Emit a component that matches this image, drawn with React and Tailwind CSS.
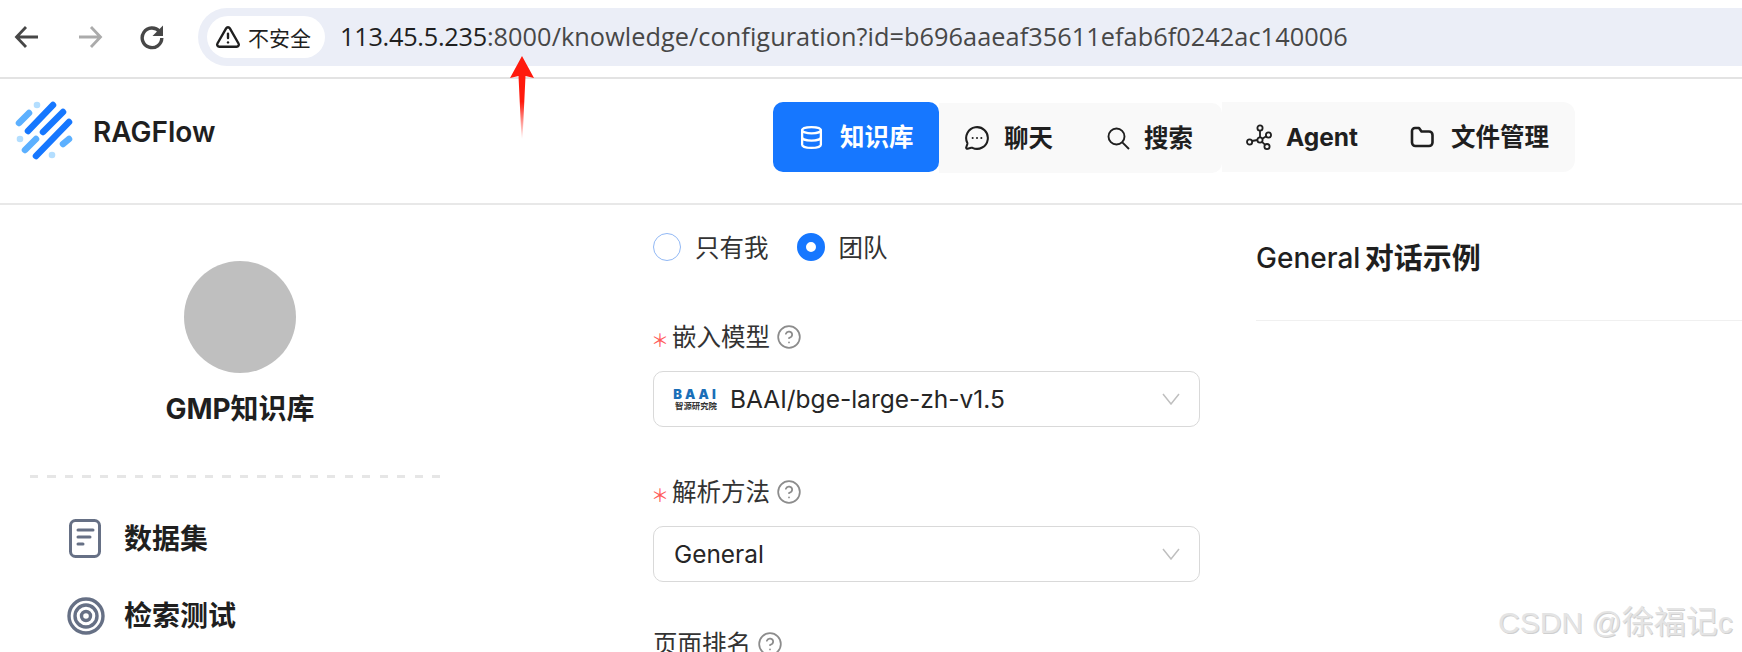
import React from "react";
import { Database, MessageCircleMore, TriangleAlert, CircleHelp } from "lucide-react";

const cjk = '"Inter","Noto Sans CJK SC",sans-serif';

function Logo() {
  const dark = [[28,131,53,105],[43,132,63,112],[36,156,69,122]];
  const light = [[19,123,29,113],[25,150,36,139],[63,144,69,139]];
  const dots = [[37,105],[20,139],[52,155]];
  return (
    <svg width="60" height="60" viewBox="14 100 60 60" className="shrink-0">
      {light.map((l, i) => <line key={i} x1={l[0]} y1={l[1]} x2={l[2]} y2={l[3]} stroke="#5cb0ff" strokeWidth="6.5" strokeLinecap="round" />)}
      {dark.map((l, i) => <line key={i} x1={l[0]} y1={l[1]} x2={l[2]} y2={l[3]} stroke="#1677ff" strokeWidth="6.5" strokeLinecap="round" />)}
      {dots.map((d, i) => <circle key={i} cx={d[0]} cy={d[1]} r="3.3" fill="#b3deff" />)}
    </svg>
  );
}

function AgentIcon() {
  return (
    <svg width="27" height="27" viewBox="0 0 27 27" fill="none" stroke="#1f1f1f" strokeWidth="1.8" className="shrink-0">
      <path d="M14 6.6 V13.4 M6 17 L11.5 16 M16.3 14.8 L20.2 12.2 M16 17.8 L19.2 20.8" />
      <circle cx="14" cy="4" r="2.6" />
      <circle cx="3.6" cy="18" r="2.6" />
      <circle cx="22.5" cy="11" r="2.6" />
      <circle cx="21" cy="22.6" r="2.6" />
      <circle cx="14" cy="16" r="2.6" />
    </svg>
  );
}

function FolderIcon() {
  return (
    <svg width="24" height="22" viewBox="0 0 24 22" fill="none" stroke="#1f1f1f" strokeWidth="2.6" className="shrink-0">
      <path d="M2 5 A3 3 0 0 1 5 2 H9 L11.5 5.5 H19 A3.5 3.5 0 0 1 22.5 9 V16.5 A3.5 3.5 0 0 1 19 20 H5.5 A3.5 3.5 0 0 1 2 16.5 Z" strokeLinejoin="round" />
    </svg>
  );
}

function SearchIcon() {
  return (
    <svg width="23" height="23" viewBox="0 0 23 23" fill="none" stroke="#1f1f1f" strokeWidth="1.9" className="shrink-0">
      <circle cx="9.5" cy="9.5" r="8" />
      <path d="M15.3 15.3 L22 22" />
    </svg>
  );
}

function Chevron() {
  return (
    <svg width="18" height="12" viewBox="0 0 18 12" fill="none" stroke="#bfbfbf" strokeWidth="1.5" className="shrink-0">
      <path d="M1 1 L9 11 L17 1" />
    </svg>
  );
}

function NavItem({ icon, label, active, className }) {
  return (
    <div className={`flex items-center h-full ${active ? "bg-[#1677ff] text-white rounded-[10px]" : "text-[#1f1f1f]"} ${className}`}>
      {icon}
      <span className="text-[24.5px] font-bold leading-none">{label}</span>
    </div>
  );
}

function FieldLabel({ text, required }) {
  return (
    <div className="flex items-center h-[30px] text-[24.5px] text-[#333333]">
      {required && <span className="text-[#ff5a5a] text-[18px] leading-none w-[21px] -ml-[2px] pt-[3px]" style={{ fontFamily: '"Noto Sans CJK SC",sans-serif' }}>＊</span>}
      <span className="leading-none">{text}</span>
      <CircleHelp size={26} strokeWidth={1.6} color="#8c8c8c" className="ml-[6px]" />
    </div>
  );
}

export default function App() {
  return (
    <div className="relative w-[1742px] h-[652px] overflow-hidden bg-white flex flex-col" style={{ fontFamily: cjk }}>
      {/* browser bar */}
      <div className="h-[79px] shrink-0 border-b-2 border-[#e3e3e3] flex items-start pt-[8px]">
        <div className="w-[198px] h-[58px] flex items-center pl-[13px] gap-[35px] shrink-0">
          <svg width="28" height="28" viewBox="0 0 28 28" fill="none" stroke="#474747" strokeWidth="2.8">
            <path d="M25 14 H4 M13 4 L3.5 14 L13 24" />
          </svg>
          <svg width="28" height="28" viewBox="0 0 28 28" fill="none" stroke="#ababab" strokeWidth="2.8">
            <path d="M3 14 H24 M15 4 L24.5 14 L15 24" />
          </svg>
          <svg width="26" height="26" viewBox="0 0 26 26" fill="none">
            <path d="M20.5 7.5 A9.8 9.8 0 1 0 22.8 14" stroke="#474747" strokeWidth="3.4" />
            <path d="M24 1.5 V12 H13.5 Z" fill="#474747" />
          </svg>
        </div>
        <div className="flex-1 h-[58px] bg-[#ebeef7] rounded-l-[29px] flex items-center pl-[9px]">
          <div className="w-[118px] h-[42px] bg-white rounded-full flex items-center pl-[8px] gap-[7px] shrink-0">
            <TriangleAlert size={26} strokeWidth={2.2} color="#1f1f1f" />
            <span className="text-[21px] text-[#1f1f1f] leading-none whitespace-nowrap" style={{ fontFamily: '"Noto Sans CJK SC",sans-serif' }}>不安全</span>
          </div>
          <div className="ml-[15px] text-[25.3px] whitespace-nowrap text-[#474747] tracking-[0.05px]" style={{ fontFamily: '"Open Sans",sans-serif' }}>
            <span className="text-[#1f1f1f] tracking-[-0.27px]">113.45.5.235</span>:8000/knowledge/configuration?id=b696aaeaf35611efab6f0242ac140006
          </div>
        </div>
      </div>

      {/* app header */}
      <div className="h-[126px] shrink-0 border-b-2 border-[#e8e8e8] relative flex items-start">
        <div className="flex items-center pl-[14px] pt-[21px] w-[773px] shrink-0">
          <Logo />
          <span className="ml-[19px] text-[28px] font-semibold text-[#1f1f1f] leading-none mt-[4px]">RAGFlow</span>
        </div>
        <div className="flex items-center h-[70px] mt-[23px]">
          <NavItem active className="w-[166px] pl-[26px] gap-[16px]" label="知识库" icon={<Database size={25} strokeWidth={2.2} />} />
          <div className="flex items-center h-[70px] w-[283px] bg-[#f9f9f9] mt-[2px] rounded-r-[10px]">
            <NavItem className="w-[168px] pl-[25px] gap-[14px]" label="聊天" icon={<MessageCircleMore size={26} strokeWidth={1.9} />} />
            <NavItem className="w-[115px] gap-[14px]" label="搜索" icon={<SearchIcon />} />
          </div>
          <div className="flex items-center h-[70px] w-[353px] bg-[#f9f9f9] rounded-r-[12px]">
            <NavItem className="w-[188px] pl-[24px] gap-[13px]" label="Agent" icon={<AgentIcon />} />
            <NavItem className="gap-[17px]" label="文件管理" icon={<FolderIcon />} />
          </div>
        </div>
      </div>

      {/* body */}
      <div className="flex flex-1 min-h-0">
        {/* sidebar */}
        <aside className="w-[653px] shrink-0 pl-[30px]">
          <div className="w-[420px] flex flex-col items-center pt-[56px]">
            <div className="w-[112px] h-[112px] rounded-full bg-[#bfbfbf]" />
            <div className="mt-[18px] text-[28px] font-bold text-[#1f1f1f] leading-[36px]">GMP知识库</div>
          </div>
          <div className="w-[412px] mt-[48px] h-[3px]" style={{ backgroundImage: "repeating-linear-gradient(to right,#e6e6e6 0 8px,transparent 8px 17.5px)" }} />
          <div className="mt-[41px] flex items-center h-[40px]">
            <div className="w-[94px] pl-[39px] shrink-0">
              <svg width="32" height="40" viewBox="0 0 32 40" fill="none" stroke="#667085" strokeWidth="3" strokeLinecap="round">
                <rect x="1.5" y="1.5" width="29" height="36" rx="5" />
                <path d="M9 11 H24 M9 18 H21 M9 25 H14" />
              </svg>
            </div>
            <span className="text-[28px] font-bold text-[#1f1f1f] leading-none">数据集</span>
          </div>
          <div className="mt-[37px] flex items-center h-[40px]">
            <div className="w-[94px] pl-[37px] shrink-0">
              <svg width="38" height="38" viewBox="0 0 38 38" fill="none" stroke="#667085" strokeWidth="3.4">
                <circle cx="19" cy="19" r="17" />
                <circle cx="19" cy="19" r="11" />
                <circle cx="19" cy="19" r="4.5" />
              </svg>
            </div>
            <span className="text-[28px] font-bold text-[#1f1f1f] leading-none">检索测试</span>
          </div>
        </aside>

        {/* form */}
        <main className="w-[547px] shrink-0 pt-[28px]">
          <div className="flex items-center h-[28px] text-[24.5px] text-[#333333]">
            <span className="w-[28px] h-[28px] rounded-full border border-[#91b8f5] bg-white shrink-0" />
            <span className="ml-[14px] leading-none pt-[2px]">只有我</span>
            <span className="ml-[28px] w-[28px] h-[28px] rounded-full border-[9px] border-[#1677ff] bg-white shrink-0" />
            <span className="ml-[14px] leading-none pt-[2px]">团队</span>
          </div>
          <div className="mt-[61px]"><FieldLabel required text="嵌入模型" /></div>
          <div className="mt-[19px] h-[56px] border border-[#d9d9d9] rounded-[10px] flex items-center pl-[21px] pr-[19px]">
            <div className="w-[42px] shrink-0 flex flex-col items-center leading-none">
              <span className="text-[13px] font-black text-[#1a6fb8] tracking-[3px] leading-[12px] whitespace-nowrap">BAAI</span>
              <span className="text-[8.4px] font-bold text-[#333] whitespace-nowrap leading-[10px]" style={{ fontFamily: '"Noto Sans CJK SC",sans-serif' }}>智源研究院</span>
            </div>
            <span className="ml-[13px] flex-1 text-[24.5px] text-[#262626] leading-none">BAAI/bge-large-zh-v1.5</span>
            <Chevron />
          </div>
          <div className="mt-[50px]"><FieldLabel required text="解析方法" /></div>
          <div className="mt-[19px] h-[56px] border border-[#d9d9d9] rounded-[10px] flex items-center pl-[20px] pr-[19px]">
            <span className="flex-1 text-[24.4px] text-[#262626] leading-none">General</span>
            <Chevron />
          </div>
          <div className="mt-[47px]"><FieldLabel text="页面排名" /></div>
        </main>

        {/* preview */}
        <section className="flex-1 pl-[56px] pt-[34px]">
          <div className="h-[38px] flex items-center text-[28px] text-[#1f1f1f] leading-none whitespace-pre">
            <span className="font-medium">General </span><span className="font-bold text-[29px] -ml-[3px]">对话示例</span>
          </div>
          <div className="mt-[43px] h-px bg-[#f0f0f0]" />
        </section>
      </div>

      {/* annotation arrow */}
      <svg width="26" height="84" viewBox="0 0 26 84" className="absolute left-[509px] top-[55px]">
        <defs>
          <linearGradient id="arrowFade" x1="0" y1="0" x2="0" y2="1">
            <stop offset="0.55" stopColor="#ff1a0d" />
            <stop offset="1" stopColor="#ff1a0d" stopOpacity="0" />
          </linearGradient>
        </defs>
        <path d="M13 1 L25 23 L16.5 21 L13.5 84 L12.5 84 L9.5 21 L1 23 Z" fill="url(#arrowFade)" />
      </svg>

      {/* watermark */}
      <div className="absolute left-[1498px] top-[602px] text-[30px] leading-[40px] whitespace-nowrap text-[#e4e4e4]" style={{ fontFamily: '"Liberation Sans","Noto Sans CJK SC",sans-serif', textShadow: "1px 1px 0 #cfcfcf" }}>
        CSDN @<span className="text-[32px]">徐福记</span>c
      </div>
    </div>
  );
}
